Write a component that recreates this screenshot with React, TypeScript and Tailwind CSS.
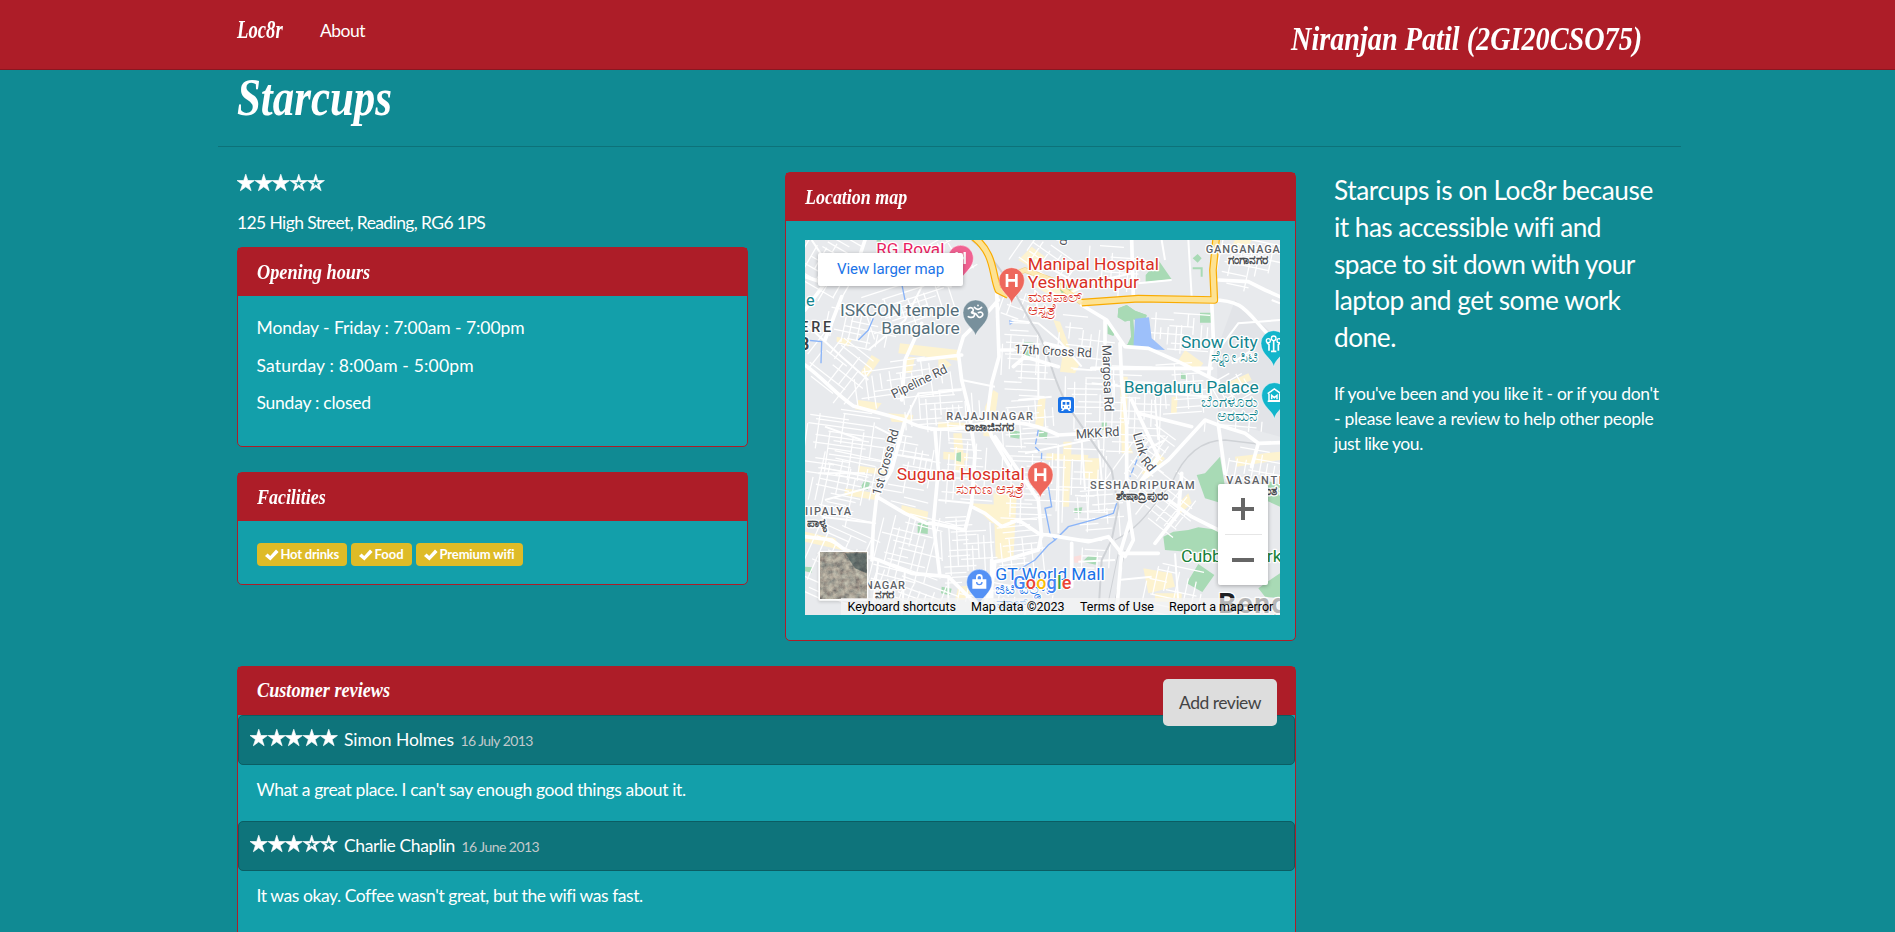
import React from "react";

const STAR =
  "M12 .6 14.69 8.9 23.41 8.89 16.36 14.02 19.05 22.31 12 17.18 4.95 22.31 7.64 14.02 .59 8.89 9.31 8.9Z";
const STAR_HOLE =
  "M12 6.6 13.35 10.75 17.7 10.75 14.18 13.31 15.53 17.46 12 14.89 8.47 17.46 9.82 13.31 6.3 10.75 10.65 10.75Z";

function Stars({ rating }: { rating: number }) {
  return (
    <span className="flex">
      {[1, 2, 3, 4, 5].map((n) => (
        <svg key={n} viewBox="0.5 0.3 23 23" className="h-[17.5px] w-[17.5px] fill-white stroke-white stroke-[.9]">
          <path fillRule="evenodd" d={n <= rating ? STAR : STAR + STAR_HOLE} />
        </svg>
      ))}
    </span>
  );
}

function Panel({ title, titleClass, action, children }: {
  title: string;
  titleClass: string;
  action?: React.ReactNode;
  children: React.ReactNode;
}) {
  return (
    <section className="mb-[25px] rounded-[5px] border border-[#ad1d28] bg-[#139faa]">
      <header className="relative flex h-[48px] items-center bg-[#ad1d28] px-[18.5px]">
        <h2
          className={`origin-left whitespace-nowrap font-['Liberation_Serif',serif] text-[22px] font-bold italic leading-[22px] ${titleClass}`}
        >
          {title}
        </h2>
        {action}
      </header>
      {children}
    </section>
  );
}

function Tag({ label, className }: { label: string; className: string }) {
  return (
    <span className={`flex h-[23px] items-center rounded-[4px] bg-[#debb27] pl-[8px] text-[13px] font-bold leading-none ${className}`}>
      <svg viewBox="0 0 14 12" className="mr-[2px] h-[12px] w-[14px] shrink-0 fill-white">
        <path d="M0 7 2.6 4.4 5.2 6.9 11 .6 13.6 3 5.4 11.6Z" />
      </svg>
      {label}
    </span>
  );
}

function Review({ rating, author, authorClass, date, dateClass, text, textClass }: {
  rating: number;
  author: string;
  authorClass: string;
  date: string;
  dateClass: string;
  text: string;
  textClass: string;
}) {
  return (
    <article>
      <div className="flex h-[50px] rounded-[5px] border border-[#0b5d63] bg-[#0e747b] pl-[11px]">
        <div className="pt-[13px]">
          <Stars rating={rating} />
        </div>
        <div className="flex items-baseline pl-[6.5px] pt-[11px]">
          <span className={authorClass}>{author}</span>
          <small className={`pl-[6.5px] text-[14px] text-[#c3c9cb] ${dateClass}`}>{date}</small>
        </div>
      </div>
      <div className="h-[56px] px-[18.5px] pt-[12px]">
        <p className={`whitespace-nowrap ${textClass}`}>{text}</p>
      </div>
    </article>
  );
}

/* ---------- map ---------- */

function makeRandom(seed: number) {
  let s = seed;
  return () => {
    s = (s * 16807) % 2147483647;
    return s / 2147483647;
  };
}

// x, y, width, height, rotation, column step, row step
const DISTRICTS: number[][] = [
  [-20, -20, 190, 200, 30, 26, 22], [180, 130, 260, 120, -18, 30, 18], [0, 300, 190, 170, 38, 24, 28],
  [60, 220, 200, 120, 12, 26, 24], [150, 360, 300, 130, -8, 26, 20], [0, 510, 230, 210, 8, 34, 14],
  [20, 640, 190, 200, 12, 26, 16], [230, 590, 150, 170, 10, 22, 24], [300, 450, 240, 130, -4, 22, 20],
  [400, 560, 170, 240, 4, 28, 18], [220, 780, 190, 260, 14, 24, 20], [410, 830, 150, 200, -3, 20, 15],
  [0, 860, 190, 230, 24, 26, 20], [200, 1000, 260, 120, 20, 24, 22], [590, 250, 150, 230, 3, 34, 17],
  [590, 480, 160, 130, -4, 24, 18], [590, 610, 170, 240, 2, 26, 16], [560, 840, 160, 170, -6, 30, 20],
  [740, 600, 170, 260, 2, 22, 26], [760, 230, 140, 160, 6, 30, 26], [780, 390, 170, 200, 1, 32, 20],
  [900, 380, 180, 260, 2, 24, 22], [1030, 220, 190, 110, 4, 18, 20], [1050, 370, 170, 160, -4, 24, 20],
  [620, 10, 180, 130, 35, 26, 26], [850, 20, 150, 140, 4, 34, 32], [1240, 0, 190, 150, 12, 28, 24],
  [960, 560, 130, 200, 36, 28, 24], [1270, 630, 160, 100, 10, 20, 20], [1000, 700, 180, 180, 38, 26, 24],
  [1020, 980, 180, 150, 12, 26, 24], [800, 900, 150, 100, 3, 38, 26], [820, 750, 130, 130, -4, 26, 20],
  [1200, 520, 200, 70, 5, 40, 30], [460, 1040, 340, 90, 10, 28, 22], [300, 10, 200, 140, -30, 28, 24],
  [590, 150, 90, 90, 20, 24, 22], [1230, 400, 110, 90, -30, 20, 18],
];

function streets() {
  const rnd = makeRandom(4711);
  return DISTRICTS.map(([x, y, w, h, a, sx, sy]) => {
    let d = "";
    for (let i = 0; i <= w; i += sx * (0.7 + rnd() * 0.7)) {
      const s = rnd() * h * 0.45;
      d += `M${i.toFixed(0)} ${s.toFixed(0)}v${(h * (0.3 + rnd() * 0.5)).toFixed(0)}`;
    }
    for (let j = 0; j <= h; j += sy * (0.7 + rnd() * 0.7)) {
      const s = rnd() * w * 0.45;
      d += `M${s.toFixed(0)} ${j.toFixed(0)}h${(w * (0.3 + rnd() * 0.5)).toFixed(0)}`;
    }
    return { d, t: `translate(${x} ${y}) rotate(${a} ${w / 2} ${h / 2})` };
  });
}

const STREETS = streets();

const BLOCKS =
  "M165 400 200 345 225 360 190 410ZM285 310 460 330 462 362 280 340ZM300 350 330 352 320 400 300 398ZM160 480 230 490 210 515 150 508ZM250 520 325 525 320 548 260 545ZM400 545 500 550 496 570 398 566ZM415 635 490 640 488 662 415 658ZM445 580 470 580 480 690 450 690ZM160 677 250 690 248 705 158 696ZM120 745 215 760 212 780 118 765ZM290 795 370 815 366 840 288 818ZM500 790 590 795 590 850 560 850ZM565 760 635 765 625 960 572 955ZM540 500 565 450 580 460 562 590 535 588ZM700 475 722 475 715 560 690 558ZM775 605 800 605 792 800 772 800ZM725 640 850 645 848 662 722 660ZM840 655 885 655 880 720 838 715ZM775 330 825 370 810 400 765 395ZM745 240 765 245 800 340 785 345ZM945 410 968 410 965 600 985 640 950 640ZM1115 370 1140 330 1195 370 1180 390ZM1060 440 1140 450 1138 465 1058 460ZM1100 470 1118 470 1115 520 1098 520ZM1010 700 1060 640 1080 655 1030 715ZM1120 790 1150 760 1160 790 1115 830ZM1015 985 1100 1000 1110 1040 1030 1060ZM1050 1060 1130 1060 1130 1085 1050 1085ZM1240 440 1330 400 1340 420 1250 460ZM640 60 680 20 720 50 690 90ZM690 140 740 110 820 150 780 190ZM460 1040 510 1035 480 1080 450 1080ZM0 875 90 895 110 930 0 905ZM1290 650 1425 635 1425 660 1295 680ZM400 340 440 375 400 400ZM1290 0 1340 0 1330 20 1280 20ZM95 290 140 300 130 320 95 305Z";
const PARKS =
  "M1022 105 1060 60 1100 118 1022 126ZM940 205 965 195 990 212 1025 225 1020 246 985 238 960 245 938 232ZM975 245 990 300 985 325 965 318 980 295ZM1185 218 1218 218 1218 248 1185 248ZM1163 55 1178 42 1190 55 1178 68ZM1163 82 1193 82 1193 110 1187 110 1187 88 1163 88ZM908 250 930 278 925 288 908 282ZM1128 398 1145 400 1142 418 1128 416ZM1175 705 1200 700 1245 650 1260 740 1250 790 1200 775ZM1075 890 1105 875 1150 870 1180 862 1240 870 1240 932 1200 940 1080 930ZM1145 1030 1180 972 1228 1005 1192 1056ZM1380 720 1425 735 1425 800 1380 780ZM1360 1045 1395 1020 1425 1000 1425 1075 1380 1070ZM338 850 370 842 368 882 338 878ZM165 745 178 722 195 728 188 750ZM614 570 645 575 643 596 614 592ZM703 570 728 578 725 597 702 590ZM452 640 468 636 468 665 454 662ZM808 805 832 802 828 820 808 818ZM832 965 850 948 876 950 872 974ZM655 305 685 308 684 320 655 316ZM665 328 680 335 672 356 655 345ZM410 1040 440 1046 435 1066 408 1060ZM0 980 22 982 20 998 0 994ZM215 0 235 0 233 12 215 12ZM890 545 906 545 904 570 890 570ZM760 140 790 130 800 150 770 160Z";
const MAJOR =
  "M0 375C60 420 90 460 145 498L300 540C360 575 420 570 480 562M480 562C600 530 690 550 760 585L850 580M460 340 470 420 490 500 510 640 500 790M460 340 475 290 545 220 580 180M575 150 582 350 560 430 545 540 560 590 620 690M570 590 700 780 710 890M500 800 540 820 590 860 640 840 700 880 760 890 850 905 910 890 950 940 1060 940M710 880 700 930 600 960 570 965 560 1040 540 1090M950 940 935 1110M945 940 975 840 965 740 965 560 950 420 945 310M975 840 985 900 960 950M830 195 905 240 960 320 1030 325 1120 365 1240 425M900 240 900 310M1220 180 1225 300 1210 410M1220 180C1330 180 1320 220 1425 320M1240 120 1330 125 1380 150 1425 170M720 310 800 330M1010 720 1090 660 1200 540 1240 555M1240 555 1260 700M1240 555 1320 580 1360 610 1340 680M1360 610 1425 608M215 770 205 860 200 960M215 770 300 820 365 850 385 850M385 850 480 870 500 790M0 890 80 900 120 930 220 960 320 1000 430 1010 500 1080 560 1125M800 910 800 1040M60 130 110 110 160 60 180 0M0 110 60 130 0 210M110 170 60 300M560 960 560 1125M300 540 260 690 215 770M980 480 1060 650 1010 720M1090 780 1160 830 1240 870M1130 700 1120 820 1050 910M390 570 400 690 385 850 405 1010M860 385 1220 385M625 380 660 350 760 380M980 0 985 170M290 480 300 360 350 250M340 360 470 345M1000 520 1160 560M590 330 625 330";
const MINOR =
  "M20 0 60 60 150 70 260 40M230 0 290 110 440 140M350 140 300 240 190 330M0 250 110 350 190 420M300 540 340 460 470 450M470 420 570 440M210 560 290 600M170 600 60 560M620 240 700 250 760 300 830 380M700 310 700 480M640 480 740 470M660 640 850 600M760 620 760 880M830 600 840 750M1000 640 1080 600M860 430 960 440M1070 460 1220 470M1240 330 1300 250 1425 240M1280 370 1340 330M1100 120 1000 130M1150 0 1160 170M1070 0 1080 60M790 160 890 120 980 100M690 60 800 120M700 230 690 150M1400 180 1425 190M430 1010 430 1125M300 990 290 1125M220 960 200 1125M1110 940 1120 1090M940 1020 1040 1010M820 965 930 960M1050 480 1060 600M880 600 890 720M410 690 520 700M400 780 500 790M240 640 380 660M60 780 200 740M40 700 180 700M50 830 210 850";

type Label = [string, number, number, number, number, string, number?];

// text, x, baseline, length, size, colour, weight
const LABELS: Label[] = [
  ["RG Royal", 214, 45, 204, 50, "#e91e63"],
  ["Manipal Hospital", 668, 91, 394, 52, "#d93025"],
  ["Yeshwanthpur", 668, 143, 334, 52, "#d93025"],
  ["ISKCON temple", 105, 228, 358, 52, "#546e7a"],
  ["Bangalore", 229, 281, 235, 52, "#546e7a"],
  ["e", 3, 199, 26, 52, "#12858e"],
  ["Snow City", 1128, 325, 230, 52, "#12858e"],
  ["Bengaluru Palace", 956, 460, 405, 52, "#12858e"],
  ["Suguna Hospital", 275, 720, 384, 52, "#d93025"],
  ["GT World Mall", 571, 1021, 328, 52, "#1a73e8"],
  ["Cubbon Park", 1128, 966, 302, 52, "#188038"],
  ["RAJAJINAGAR", 424, 540, 260, 33, "#5f6368", 500],
  ["SESHADRIPURAM", 855, 748, 314, 33, "#5f6368", 500],
  ["GANGANAGAR", 1202, 38, 246, 33, "#5f6368", 500],
  ["VASANTH NAGAR", 1264, 733, 330, 33, "#5f6368", 500],
  ["IIPALYA", 0, 825, 138, 33, "#5f6368", 500],
  ["NAGAR", 180, 1046, 120, 33, "#5f6368", 500],
  ["ERE", -14, 277, 92, 43, "#3c4043", 500],
  ["3", -14, 330, 27, 54, "#3c4043", 700],
];

// text, x, baseline, size, colour, anchor, weight
const KANNADA: [string, number, number, number, string, "start" | "middle" | "end", number][] = [
  ["ಮಣಿಪಾಲ್", 668, 185, 45, "#d93025", "start", 400],
  ["ಆಸ್ಪತ್ರೆ", 668, 226, 45, "#d93025", "start", 400],
  ["ಸ್ನೋ ಸಿಟಿ", 1358, 366, 44, "#12858e", "end", 400],
  ["ಬೆಂಗಳೂರು", 1360, 502, 44, "#12858e", "end", 400],
  ["ಅರಮನೆ", 1360, 543, 44, "#12858e", "end", 400],
  ["ಸುಗುಣ ಆಸ್ಪತ್ರೆ", 661, 761, 45, "#d93025", "end", 400],
  ["ಜಿಟಿ ವರ್ಲ್ಡ್", 570, 1062, 44, "#1a73e8", "start", 400],
  ["ಮಾಲ್", 572, 1104, 42, "#1a73e8", "start", 400],
  ["ರಾಜಾಜಿನಗರ", 553, 573, 36, "#4a4d51", "middle", 700],
  ["ಶೇಷಾದ್ರಿಪುರಂ", 1010, 781, 36, "#4a4d51", "middle", 700],
  ["ಗಂಗಾನಗರ", 1330, 71, 36, "#4a4d51", "middle", 700],
  ["ವಸಂತ ನಗರ", 1340, 766, 36, "#4a4d51", "start", 700],
  ["ಪಾಳ್ಯ", 6, 860, 36, "#4a4d51", "start", 700],
  ["ನಗರ", 268, 1078, 36, "#4a4d51", "end", 700],
];

function Pin({ x, y, color, children }: { x: number; y: number; color: string; children: React.ReactNode }) {
  return (
    <g transform={`translate(${x} ${y})`}>
      <path d="M0 70C-4 46-38 34-38 0A38 38 0 0 1 38 0C38 34 4 46 0 70Z" fill={color} stroke="#fff" strokeOpacity=".6" strokeWidth="2" />
      {children}
    </g>
  );
}

function MapDrawing() {
  return (
    <svg viewBox="0 0 1425 1125" className="block h-[375px] w-[475px]">
      <defs>
        <filter id="ground" x="0" y="0" width="100%" height="100%">
          <feTurbulence type="fractalNoise" baseFrequency=".06" numOctaves="4" seed="8" />
          <feColorMatrix values=".6 0 0 0 .08  .55 .1 0 0 .03  .42 .1 0 0 .04  0 0 0 0 1" />
        </filter>
      </defs>
      <rect width="1425" height="1125" fill="#e8eaed" />
      <path d="M1290 180 1425 300 1425 590 1240 540 1235 330Z" fill="#e2e4e8" />
      <path d={BLOCKS} fill="#fdf3d0" />
      <path d={PARKS} fill="#a8dab5" />
      <path d="M612 240 628 246 614 256Z" fill="#9dc0fa" />
      <path d="M806 950 830 945 832 968 808 968Z" fill="#fbdedc" />
      {STREETS.map((s, i) => (
        <path key={i} d={s.d} transform={s.t} fill="none" stroke="#fff" strokeWidth="3.8" />
      ))}
      <path d={MINOR} fill="none" stroke="#fff" strokeWidth="6" />
      <path d="M938 232 940 205 965 195 990 212 1025 225 1020 246 985 238 990 300 985 325 965 318 978 290 975 243Z" fill="#a8dab5" />
      <path d="M990 236 1032 232 1040 295 1080 330 985 326Z" fill="#9dc0fa" />
      <g fill="none" stroke="#cfd2d6" strokeWidth="6">
        <path d="M500 0C580 60 620 140 680 250 740 330 730 400 790 500L920 690 940 800 920 900 890 960 880 1125" />
        <path d="M930 900C1010 860 1040 800 1100 730 1130 660 1180 600 1260 600L1360 612" strokeWidth="4" />
        <path d="M940 940 905 1110M960 930 925 1110" strokeWidth="3" />
      </g>
      <g fill="none" stroke="#8ab4f8" strokeWidth="4">
        <path d="M205 235 190 270 160 300M0 300 50 305 48 370M290 130 300 180" />
        <path d="M730 740 740 800 720 805 735 880 750 900 730 915 690 960 640 990 M750 900 790 860 870 838 925 820 935 790" />
        <path d="M700 570 690 620 710 640 708 690M1030 620 1000 650 975 710" strokeDasharray="18 8" />
      </g>
      <path d={MAJOR} fill="none" stroke="#fff" strokeWidth="11" strokeLinejoin="round" strokeLinecap="round" />
      <g fill="none" strokeLinejoin="round">
        <g stroke="#f9ab00" strokeWidth="23">
          <path d="M505-10C570 40 560 100 580 150L610 165M830 188 1000 176 1228 180 1224 90 1234-10" />
        </g>
        <g stroke="#f9ab00" strokeWidth="16">
          <path d="M610 110 660 90 740 120 830 188" strokeOpacity=".45" />
        </g>
        <g stroke="#fde293" strokeWidth="16">
          <path d="M505-10C570 40 560 100 580 150L610 165M830 188 1000 176 1228 180 1224 90 1234-10" />
        </g>
        <path d="M610 110 660 90 740 120 830 188" stroke="#fdeab3" strokeWidth="13" />
      </g>

      <g className="font-['Roboto','Noto_Sans',sans-serif]" fill="#50545a" fontSize="38" stroke="#fff" strokeWidth="7" paintOrder="stroke">
        <text transform="translate(628 340) rotate(3)" textLength="232">17th Cross Rd</text>
        <text transform="translate(892 315) rotate(88)" textLength="200">Margosa Rd</text>
        <text transform="translate(266 476) rotate(-26)" textLength="182">Pipeline Rd</text>
        <text transform="translate(226 768) rotate(-74)" textLength="204">1st Cross Rd</text>
        <text transform="translate(814 596) rotate(-4)" textLength="130">MKK Rd</text>
        <text transform="translate(984 582) rotate(74)" textLength="70">Link</text>
        <text transform="translate(1006 664) rotate(50)" textLength="44">Rd</text>
        <text transform="translate(784 18) rotate(-82)">d</text>
      </g>
      <g className="font-['Roboto','Noto_Sans',sans-serif]" stroke="#fff" strokeWidth="8" strokeLinejoin="round" paintOrder="stroke">
        {LABELS.map(([t, x, y, len, size, color, weight]) => (
          <text key={t} x={x} y={y} textLength={len} lengthAdjust={weight === 500 ? "spacing" : "spacingAndGlyphs"} fontSize={size} fontWeight={weight} fill={color}>
            {t}
          </text>
        ))}
        {KANNADA.map(([t, x, y, size, color, anchor, weight]) => (
          <text key={t} x={x} y={y} fontSize={size} fontWeight={weight} fill={color} textAnchor={anchor}>
            {t}
          </text>
        ))}
        <text x="1240" y="1118" fontSize="84" fontWeight="700" fill="#202124" textLength="420">Bengaluru</text>
      </g>

      <Pin x={467} y={54} color="#f06292">
        <path d="M-12 18V-18M12 18V-18M-12 0H12" stroke="#fff" strokeWidth="7" />
      </Pin>
      <Pin x={620} y={121} color="#ee675c">
        <path d="M-14-19V20M14-19V20M-14 0H14" stroke="#fff" strokeWidth="8" />
      </Pin>
      <Pin x={706} y={704} color="#ee675c">
        <path d="M-14-19V20M14-19V20M-14 0H14" stroke="#fff" strokeWidth="8" />
      </Pin>
      <Pin x={512} y={218} color="#78909c">
        <path d="M-22-12C-10-20 0-6-14 0 4 0-2 20-22 12M-10 2C8-4 2 18 14 14 28 8 20-6 8 0M-4-16C2-8 12-8 18-16M7-22V-21" fill="none" stroke="#fff" strokeWidth="5" strokeLinecap="round" />
      </Pin>
      <Pin x={523} y={1026} color="#5491f5">
        <path d="M-21-8H21V20H-21ZM-10-8V-14A10 10 0 0 1 10-14V-8H5V-13A5 5 0 0 0-5-13V-8Z" fill="#fff" />
        <path d="M-8 0A8 8 0 0 0 8 0" fill="none" stroke="#5491f5" strokeWidth="4" />
      </Pin>
      <Pin x={1406} y={310} color="#12b5cb">
        <path d="M0 24V-8M-14 22V4L-20-2M14 22V4L20-2M-8 24H8" fill="none" stroke="#fff" strokeWidth="5" />
        <g fill="none" stroke="#fff" strokeWidth="4">
          <circle cx="0" cy="-15" r="7" />
          <circle cx="-16" cy="-8" r="6" />
          <circle cx="16" cy="-8" r="6" />
        </g>
      </Pin>
      <Pin x={1408} y={466} color="#12b5cb">
        <path d="M-20-5 0-19 20-5M-16-5V16H16V-5M-20 18H20M-8 12V0L0 7 8 0V12" fill="none" stroke="#fff" strokeWidth="4.5" />
      </Pin>

      <rect x="759" y="471" width="48" height="48" rx="8" fill="#1a73e8" />
      <path d="M774 479H792Q798 479 798 485V503Q798 507 793 507L798 513H792L787 508H779L774 513H768L773 507Q768 507 768 503V485Q768 479 774 479Z" fill="#fff" />
      <path d="M773 486H781V494H773ZM785 486H793V494H785ZM773 499H777V503H773ZM789 499H793V503H789Z" fill="#1a73e8" />

      <g fontSize="54" fontWeight="500" className="font-['Roboto',sans-serif]" stroke="#fff" strokeWidth="6" paintOrder="stroke">
        <text x="625" y="1047" textLength="174">
          <tspan fill="#4285f4">G</tspan>
          <tspan fill="#ea4335">o</tspan>
          <tspan fill="#fbbc04">o</tspan>
          <tspan fill="#4285f4">g</tspan>
          <tspan fill="#34a853">l</tspan>
          <tspan fill="#ea4335">e</tspan>
        </text>
      </g>

      <g>
        <rect x="40" y="932" width="150" height="150" rx="5" fill="#fff" className="drop-shadow-lg" />
        <rect x="45" y="937" width="140" height="140" filter="url(#ground)" />
        <path d="M120 940 185 940 185 1000 150 985Z" fill="#2b4448" opacity=".55" />
      </g>
    </svg>
  );
}

function LocationMap() {
  return (
    <div className="relative h-[375px] w-[475px] overflow-hidden font-['Roboto',sans-serif]">
      <MapDrawing />
      <a className="absolute left-[13px] top-[13px] flex h-[33px] w-[145px] items-center justify-center rounded-[2px] bg-white text-[15px] tracking-[-.05px] text-[#1a73e8] shadow-[0_1px_4px_rgba(0,0,0,.3)]">
        View larger map
      </a>
      <div className="absolute left-[413px] top-[244px] flex h-[101px] w-[50px] flex-col items-center rounded-[2px] bg-white shadow-[0_1px_4px_rgba(0,0,0,.3)]">
        <svg viewBox="0 0 50 50" className="h-[50px] w-[50px] fill-[#666]">
          <path d="M23 14H27V23H36V27H27V36H23V27H14V23H23Z" />
        </svg>
        <div className="h-px w-[37px] bg-[#e6e6e6]" />
        <svg viewBox="0 0 50 50" className="h-[50px] w-[50px] fill-[#666]">
          <path d="M14 23H36V27H14Z" />
        </svg>
      </div>
      <div className="absolute bottom-0 right-0 flex h-[17px] w-[439px] items-center whitespace-nowrap bg-[#f5f5f5]/70 pt-px text-[12.5px] leading-none text-black">
        <span className="w-[123.5px] pl-[6.5px]">Keyboard shortcuts</span>
        <span className="w-[109px] pl-[6.5px]">Map data ©2023</span>
        <span className="w-[89px] pl-[6.5px]">Terms of Use</span>
        <span className="pl-[6.5px]">Report a map error</span>
      </div>
    </div>
  );
}

/* ---------- page ---------- */

export default function App() {
  return (
    <div className="h-[932px] overflow-hidden bg-[#108a93] font-['Lato',sans-serif] text-[17.5px] leading-[25px] text-white">
      <nav className="h-[70px] border-b border-[#8a1720] bg-[#ad1d28]">
        <div className="ml-[218px] flex w-[1463px] pl-[19px]">
          <a className="w-[83px] pt-[15px]">
            <span className="inline-block origin-left scale-x-[.72] font-['Liberation_Serif',serif] text-[26px] font-bold italic leading-[30px]">
              Loc8r
            </span>
          </a>
          <a className="flex-1 pt-[18px] tracking-[-.5px]">About</a>
          <span className="w-[390px] origin-left scale-x-[.83] whitespace-nowrap pt-[20px] font-['Liberation_Serif',serif] text-[34px] font-bold italic leading-[38px]">
            Niranjan Patil (2GI20CSO75)
          </span>
        </div>
      </nav>

      <main className="ml-[218px] w-[1463px]">
        <div className="mb-[25px] h-[77px] border-b border-[#0d7279] pl-[19px] pt-[2px]">
          <h1 className="w-[200px] origin-left scale-x-[.825] font-['Liberation_Serif',serif] text-[52px] font-bold italic leading-[52px]">
            Starcups
          </h1>
        </div>

        <div className="flex">
          <div className="w-[1097px] px-[19px]">
            <div className="flex justify-between">
              <div className="w-[511px]">
                <div className="mb-[13px] flex h-[25px] pt-[2px]">
                  <Stars rating={3} />
                </div>
                <p className="mb-[12px] tracking-[-.61px]">125 High Street, Reading, RG6 1PS</p>
                <Panel title="Opening hours" titleClass="scale-x-[.83]">
                  <div className="flex h-[150px] flex-col gap-[12.5px] px-[18.5px] pt-[19px]">
                    <p className="tracking-[-.07px]">Monday - Friday : 7:00am - 7:00pm</p>
                    <p className="tracking-[.18px]">Saturday : 8:00am - 5:00pm</p>
                    <p className="tracking-[-.25px]">Sunday : closed</p>
                  </div>
                </Panel>
                <Panel title="Facilities" titleClass="scale-x-[.815]">
                  <div className="flex h-[63px] gap-[4px] px-[18.5px] pt-[22px]">
                    <Tag label="Hot drinks" className="w-[90px] tracking-[-.22px]" />
                    <Tag label="Food" className="w-[61px]" />
                    <Tag label="Premium wifi" className="w-[107px] tracking-[-.14px]" />
                  </div>
                </Panel>
              </div>

              <div className="w-[511px]">
                <Panel title="Location map" titleClass="scale-x-[.815]">
                  <div className="h-[419px] pl-[19px] pt-[19px]">
                    <LocationMap />
                  </div>
                </Panel>
              </div>
            </div>

            <Panel
              title="Customer reviews"
              titleClass="-translate-y-px scale-x-[.828]"
              action={
                <button className="absolute right-[18px] top-[12px] h-[47px] w-[114px] rounded-[5px] bg-[#ddd] tracking-[-.49px] text-[#444]">
                  Add review
                </button>
              }
            >
              <Review
                rating={5}
                author="Simon Holmes"
                authorClass="tracking-[-.05px]"
                date="16 July 2013"
                dateClass="tracking-[-.56px]"
                text="What a great place. I can't say enough good things about it."
                textClass="tracking-[-.38px]"
              />
              <Review
                rating={3}
                author="Charlie Chaplin"
                authorClass="tracking-[-.38px]"
                date="16 June 2013"
                dateClass="tracking-[-.54px]"
                text="It was okay. Coffee wasn't great, but the wifi was fast."
                textClass="tracking-[-.43px]"
              />
              <div className="h-[60px]" />
            </Panel>
          </div>

          <aside className="w-[366px] whitespace-nowrap pl-[19px]">
            <p className="mb-[25px] text-[26.25px] leading-[36.75px]">
              <span className="block tracking-[-.42px]">Starcups is on Loc8r because</span>
              <span className="block tracking-[-.55px]">it has accessible wifi and</span>
              <span className="block tracking-[-.6px]">space to sit down with your</span>
              <span className="block tracking-[-.48px]">laptop and get some work</span>
              <span className="block tracking-[-.46px]">done.</span>
            </p>
            <p>
              <span className="block tracking-[-.31px]">If you've been and you like it - or if you don't</span>
              <span className="block tracking-[-.3px]">- please leave a review to help other people</span>
              <span className="block tracking-[-.43px]">just like you.</span>
            </p>
          </aside>
        </div>
      </main>
    </div>
  );
}
